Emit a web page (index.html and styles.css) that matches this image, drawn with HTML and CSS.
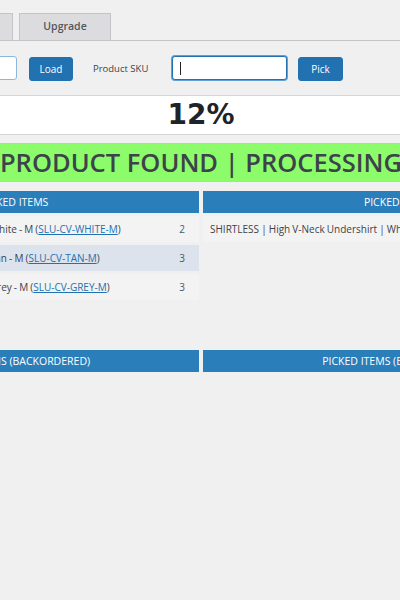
FILE: index.html
```html
<!DOCTYPE html>
<html lang="en">
<head>
    <meta charset="UTF-8">
    <meta name="viewport" content="width=device-width, initial-scale=1.0">
    <title>Order Picking</title>
    <link rel="stylesheet" href="styles.css">
</head>
<body>
    <div class="wrap">
        <nav class="tabs">
            <a href="#" class="tab tab-first">Pick Orders</a>
            <a href="#" class="tab tab-upgrade">Upgrade</a>
        </nav>

        <div class="scan-row">
            <label class="field-label" for="order-id">Order ID</label>
            <input type="text" id="order-id" class="field order-field" value="">
            <button class="btn">Load</button>
            <label class="field-label sku-label" for="sku">Product SKU</label>
            <div class="field sku-field"><span class="caret"></span></div>
            <button class="btn btn-pick">Pick</button>
        </div>

        <div class="progress">12%</div>

        <div class="status">PRODUCT FOUND | PROCESSING</div>

        <div class="lists">
            <section class="list">
                <h3 class="list-head">UNPICKED ITEMS</h3>
                <table class="items">
                    <tr>
                        <td class="item-name">SHIRTLESS | High V-Neck Undershirt | White - M (<a href="#">SLU-CV-WHITE-M</a>)</td>
                        <td class="item-qty">2</td>
                    </tr>
                    <tr class="current">
                        <td class="item-name">SHIRTLESS | High V-Neck Undershirt | Tan - M (<a href="#">SLU-CV-TAN-M</a>)</td>
                        <td class="item-qty">3</td>
                    </tr>
                    <tr>
                        <td class="item-name">SHIRTLESS | High V-Neck Undershirt | Grey - M (<a href="#">SLU-CV-GREY-M</a>)</td>
                        <td class="item-qty">3</td>
                    </tr>
                </table>
            </section>

            <section class="list">
                <h3 class="list-head">PICKED ITEMS</h3>
                <table class="items">
                    <tr>
                        <td class="item-name">SHIRTLESS | High V-Neck Undershirt | White - M (<a href="#">SLU-CV-WHITE-M</a>)</td>
                        <td class="item-qty">1</td>
                    </tr>
                </table>
            </section>

            <section class="list">
                <h3 class="list-head">UNPICKED ITEMS (BACKORDERED)</h3>
            </section>

            <section class="list">
                <h3 class="list-head">PICKED ITEMS (BACKORDERED)</h3>
            </section>
        </div>
    </div>
</body>
</html>
```

FILE: styles.css
```css
body {
    font-family: "Open Sans", "Noto Sans", sans-serif;
    margin: 0;
    padding: 0;
    background-color: #f0f0f1;
    color: #3c434a;
    overflow: hidden;
}
.wrap {
    width: 784px;
    margin-left: -191px;
}
.tabs {
    display: flex;
    gap: 6px;
    padding: 13px 0 0 114px;
    border-bottom: 1px solid #c3c4c7;
}
.tab {
    display: block;
    box-sizing: border-box;
    height: 27px;
    line-height: 25px;
    background: #dcdcde;
    border: 1px solid #c3c4c7;
    border-bottom: none;
    color: #50575e;
    font-size: 10.5px;
    font-weight: 600;
    text-decoration: none;
    text-align: center;
}
.tab-first {
    width: 90px;
}
.tab-upgrade {
    width: 92px;
}
.scan-row {
    display: flex;
    align-items: center;
    margin-top: 15px;
    height: 24px;
}
.field-label {
    font-size: 9.5px;
    color: #3c434a;
    width: 60px;
    margin-right: 12px;
}
.sku-label {
    width: 79px;
    margin-left: 20px;
    margin-right: 0;
}
.field {
    box-sizing: border-box;
    height: 24px;
    background: white;
    border: 1px solid #8cb8e0;
    border-radius: 3px;
    padding: 0 6px;
    font-size: 11px;
}
.order-field {
    width: 136px;
}
.sku-field {
    display: flex;
    align-items: center;
    width: 115px;
    border: 1px solid #2271b1;
    box-shadow: 0 0 0 1px #5fa0d8;
}
.caret {
    width: 1px;
    height: 13px;
    margin-left: 1px;
    background: #1d2327;
}
.btn {
    box-sizing: border-box;
    height: 24px;
    margin-top: 2px;
    width: 44px;
    margin-left: 12px;
    background: #2271b1;
    border: 1px solid #2271b1;
    border-radius: 3px;
    color: white;
    font-family: "Open Sans", "Noto Sans", sans-serif;
    font-size: 10px;
    padding: 0;
}
.btn-pick {
    width: 45px;
    margin-left: 11px;
}
.progress {
    margin-top: 15px;
    height: 38px;
    background: white;
    border-top: 1px solid #d5d5d7;
    border-bottom: 1px solid #d5d5d7;
    text-align: center;
    font-family: "DejaVu Sans", Verdana, sans-serif;
    font-weight: bold;
    font-size: 28px;
    line-height: 38px;
    color: #1d2327;
}
.status {
    margin-top: 8px;
    height: 37px;
    background: #8cfc6a;
    border-top: 1px solid #a8e095;
    border-bottom: 1px solid #a8e095;
    text-align: center;
    font-size: 25.5px;
    font-weight: 600;
    line-height: 37px;
    color: #3c434a;
    white-space: nowrap;
}
.lists {
    margin-top: 9px;
    display: grid;
    grid-template-columns: 1fr 1fr;
    column-gap: 4px;
    row-gap: 9px;
}
.list {
    min-height: 150px;
}
.list-head {
    margin: 0;
    height: 22px;
    line-height: 22px;
    background: #2a7eba;
    color: white;
    font-size: 10.5px;
    font-weight: normal;
    text-align: center;
}
.list:nth-child(odd) .list-head {
    text-indent: 5px;
}
.items {
    width: 100%;
    border-collapse: separate;
    border-spacing: 0 3px;
    font-size: 10px;
}
.items td {
    height: 26px;
    padding: 0;
    background: #f3f3f4;
}
.items .current td {
    background: #dce3ed;
}
.item-name {
    padding-left: 4px !important;
    word-spacing: -0.5px;
}
.list:nth-child(even) .item-name {
    padding-left: 7px !important;
}
.item-qty {
    width: 34px;
    text-align: center;
    color: #50575e;
}
.items a {
    color: #2271b1;
}
```
